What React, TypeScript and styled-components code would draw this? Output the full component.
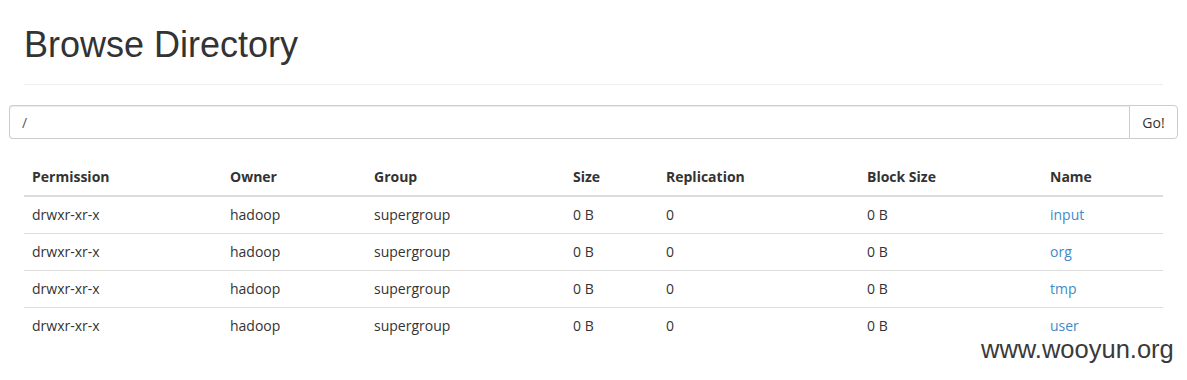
import styled, { createGlobalStyle } from "styled-components";

const GlobalStyle = createGlobalStyle`
  html, body {
    margin: 0;
    padding: 0;
    background: #fff;
  }
  body {
    font-family: "Open Sans", "Noto Sans", sans-serif;
    font-size: 14px;
    color: #333;
  }
`;

const Page = styled.div`
  position: relative;
  width: 1187px;
  height: 380px;
  overflow: hidden;
`;
const Container = styled.div`
  padding: 0 24px;
`;
const Header = styled.div`
  padding-bottom: 19px;
  margin: 0 0 20px;
  border-bottom: 1px solid #eee;
`;
const Title = styled.h1`
  margin: 0;
  padding-top: 25px;
  font-family: "Liberation Sans", Arial, sans-serif;
  font-size: 36px;
  font-weight: 500;
  line-height: 40px;
  color: #333;
`;
const Row = styled.div`
  margin: 0 -15px;
`;
const InputGroup = styled.div`
  display: flex;
  height: 34px;
`;
const PathInput = styled.input`
  flex: 1;
  height: 34px;
  box-sizing: border-box;
  padding: 6px 12px;
  font-family: "Open Sans", "Noto Sans", sans-serif;
  font-size: 14px;
  color: #555;
  border: 1px solid #ccc;
  border-right: none;
  border-radius: 4px 0 0 4px;
  outline: none;
  box-shadow: inset 0 1px 1px rgba(0, 0, 0, 0.075);
`;
const GoButton = styled.button`
  width: 49px;
  height: 34px;
  box-sizing: border-box;
  padding: 0;
  font-family: "Open Sans", "Noto Sans", sans-serif;
  font-size: 14px;
  color: #333;
  background: #fff;
  border: 1px solid #ccc;
  border-radius: 0 4px 4px 0;
`;
const Table = styled.table`
  width: 100%;
  margin-top: 20px;
  border-collapse: collapse;
  table-layout: fixed;
`;
const Th = styled.th<{ $w: number }>`
  box-sizing: border-box;
  width: ${(p) => p.$w}px;
  padding: 8px;
  text-align: left;
  font-weight: 700;
  line-height: 20px;
  border-bottom: 2px solid #ddd;
  white-space: nowrap;
`;
const Td = styled.td`
  padding: 8px;
  line-height: 20px;
  border-top: 1px solid #ddd;
  white-space: nowrap;
`;
const BodyRow = styled.tr`
  &:first-child td {
    border-top: none;
  }
`;
const Link = styled.a`
  color: #428bca;
  text-decoration: none;
`;
const Watermark = styled.div`
  position: absolute;
  left: 981px;
  top: 336px;
  font-family: "Liberation Sans", Arial, sans-serif;
  font-size: 25.5px;
  line-height: 26px;
  color: #3a3a3a;
`;

const columns: [string, number][] = [
  ["Permission", 198],
  ["Owner", 144],
  ["Group", 199],
  ["Size", 93],
  ["Replication", 201],
  ["Block Size", 183],
  ["Name", 121],
];

const entries = ["input", "org", "tmp", "user"];

export default function App() {
  return (
    <Page>
      <GlobalStyle />
      <Container>
        <Header>
          <Title>Browse Directory</Title>
        </Header>
        <Row>
          <InputGroup>
            <PathInput defaultValue="/" />
            <GoButton>Go!</GoButton>
          </InputGroup>
        </Row>
        <Table>
          <thead>
            <tr>
              {columns.map(([label, w]) => (
                <Th key={label} $w={w}>
                  {label}
                </Th>
              ))}
            </tr>
          </thead>
          <tbody>
            {entries.map((name) => (
              <BodyRow key={name}>
                <Td>drwxr-xr-x</Td>
                <Td>hadoop</Td>
                <Td>supergroup</Td>
                <Td>0 B</Td>
                <Td>0</Td>
                <Td>0 B</Td>
                <Td>
                  <Link href="#">{name}</Link>
                </Td>
              </BodyRow>
            ))}
          </tbody>
        </Table>
      </Container>
      <Watermark>www.wooyun.org</Watermark>
    </Page>
  );
}
